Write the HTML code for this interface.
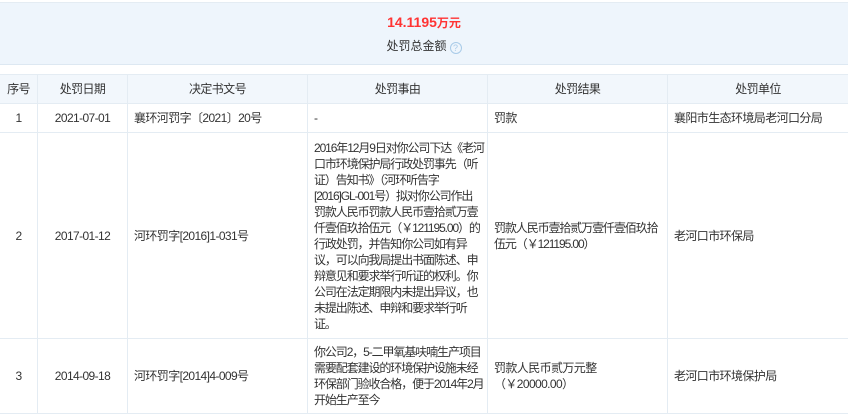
<!DOCTYPE html>
<html><head><meta charset="utf-8"><style>
*{margin:0;padding:0;box-sizing:border-box}
body{width:848px;height:416px;overflow:hidden;background:#fff;font-family:"Liberation Sans","Noto Sans CJK SC",sans-serif;font-size:12px;color:#333;position:relative}
.top{position:absolute;top:0;left:0;width:848px;height:3px;border-bottom:1px solid #e4ecf3}
.sum{position:absolute;top:3px;left:0;width:848px;height:62px;background:#eef5fc;border-bottom:1px solid #dde8f2;text-align:center}
.amt{position:absolute;top:11px;width:100%;color:#f33;font-weight:bold;font-size:14px}
.amt span{font-size:12px}
.lbl{position:absolute;top:34px;width:100%;font-size:12px;color:#333}
.q{display:inline-block;width:12px;height:12px;border:1px solid #a9cbe8;border-radius:50%;color:#a9cbe8;font-size:9px;line-height:10px;vertical-align:-1px;margin-left:3px}
table{position:absolute;top:74px;left:-1px;width:849px;border-collapse:collapse;table-layout:fixed}
td,th{border:1px solid #e4ecf3;font-weight:normal;line-height:16px;vertical-align:middle;white-space:nowrap;overflow:hidden;letter-spacing:-0.6px}
th{background:#f2f7fc;height:29px;text-align:center}
td{padding:0 6px}
td.r{letter-spacing:-1.1px}
.c{text-align:center;padding:0}
</style></head><body>
<div class="top"></div>
<div class="sum"><div class="amt">14.1195<span>万元</span></div><div class="lbl">处罚总金额<span class="q">?</span></div></div>
<table>
<colgroup><col style="width:38px"><col style="width:90px"><col style="width:180px"><col style="width:180px"><col style="width:180px"><col style="width:181px"></colgroup>
<tr><th>序号</th><th>处罚日期</th><th>决定书文号</th><th>处罚事由</th><th>处罚结果</th><th>处罚单位</th></tr>
<tr style="height:29px"><td class="c">1</td><td class="c">2021-07-01</td><td>襄环河罚字〔2021〕20号</td><td>-</td><td>罚款</td><td>襄阳市生态环境局老河口分局</td></tr>
<tr style="height:206px"><td class="c">2</td><td class="c">2017-01-12</td><td>河环罚字[2016]1-031号</td><td class="r">2016年12月9日对你公司下达《老河<br>口市环境保护局行政处罚事先（听<br>证）告知书》（河环听告字<br>[2016]GL-001号）拟对你公司作出<br>罚款人民币罚款人民币壹拾贰万壹<br>仟壹佰玖拾伍元（￥121195.00）的<br>行政处罚，并告知你公司如有异<br>议，可以向我局提出书面陈述、申<br>辩意见和要求举行听证的权利。你<br>公司在法定期限内未提出异议，也<br>未提出陈述、申辩和要求举行听<br>证。</td><td class="r">罚款人民币壹拾贰万壹仟壹佰玖拾<br>伍元（￥121195.00）</td><td>老河口市环保局</td></tr>
<tr style="height:75px"><td class="c">3</td><td class="c">2014-09-18</td><td>河环罚字[2014]4-009号</td><td class="r">你公司2，5-二甲氧基呋喃生产项目<br>需要配套建设的环境保护设施未经<br>环保部门验收合格，便于2014年2月<br>开始生产至今</td><td>罚款人民币贰万元整<br>（￥20000.00）</td><td>老河口市环境保护局</td></tr>
</table>
</body></html>
